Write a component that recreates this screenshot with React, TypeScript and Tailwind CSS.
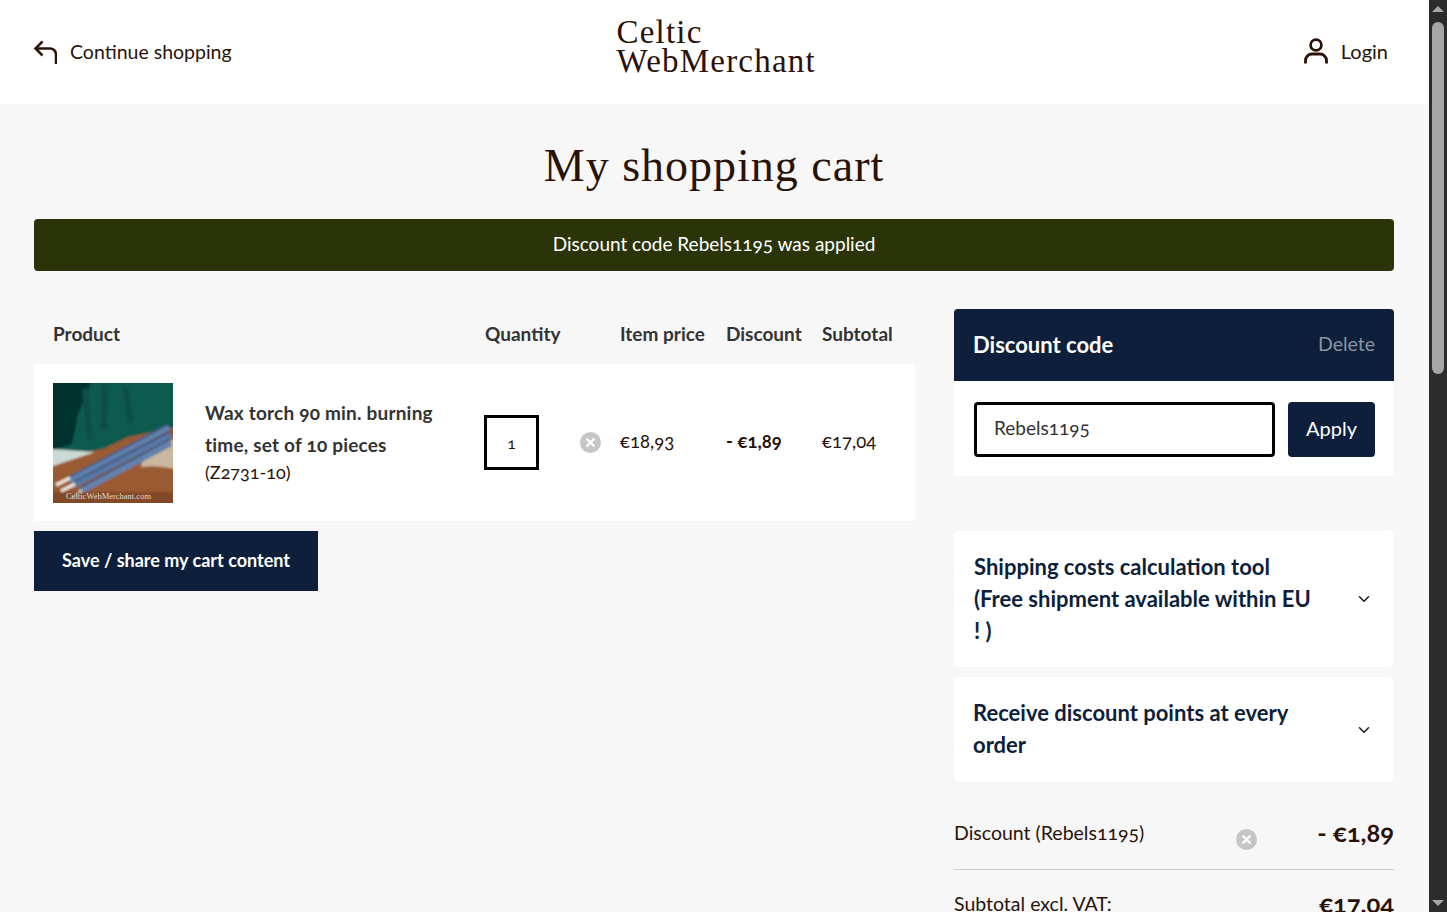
import { ChevronDown, X } from 'lucide-react'

const sans = "font-['Lato','Open_Sans',sans-serif] [font-variant-numeric:oldstyle-nums]"

function RemoveIcon() {
  return (
    <span className="flex h-[21px] w-[21px] items-center justify-center rounded-full bg-[#c6c6c6] text-white">
      <X size={13} strokeWidth={4.5} />
    </span>
  )
}

function BackIcon() {
  return (
    <svg viewBox="0 0 24 24" fill="none" stroke="currentColor" strokeWidth="2.5" className="h-6 w-6">
      <path d="M9.5 1.5 L2.5 8.5 L9.5 15.5" />
      <path d="M2.5 8.5 H17 a6 6 0 0 1 6 6 V24" />
    </svg>
  )
}

function UserIcon() {
  return (
    <svg viewBox="0 0 24 26" fill="none" stroke="currentColor" strokeWidth="2.8" className="h-[26px] w-6">
      <circle cx="12" cy="7" r="5.4" />
      <path d="M1.5 25.5 v-3 a6.5 6.5 0 0 1 6.5 -6.5 h8 a6.5 6.5 0 0 1 6.5 6.5 v3" />
    </svg>
  )
}

function TorchPhoto() {
  return (
    <svg viewBox="0 0 120 120" className="h-[120px] w-[120px] shrink-0">
      <defs>
        <filter id="soft">
          <feGaussianBlur stdDeviation="1.2" />
        </filter>
      </defs>
      <g filter="url(#soft)">
        <rect x="-3" y="-3" width="126" height="126" fill="#0e5a50" />
        <path d="M-3 -3h42l-14 34-6 30-25 8z" fill="#04302f" />
        <path d="M32 6l5 50M52 2l-1 44M72 4l6 36" stroke="#0b4f47" strokeWidth="6" />
        <path d="M-3 76 L50 66 L75 54 L123 44 V123 H-3z" fill="#9a5a30" />
        <path d="M-3 66 L42 69 L-3 84z" fill="#cdd9d4" />
        <path d="M88 84 q2 -18 34 -28 v30 q-18 -4 -34 -2z" fill="#c9b89e" />
        <path d="M16 97 L116 44" stroke="#5f7fac" strokeWidth="7" />
        <path d="M20 102 L118 52" stroke="#5877a6" strokeWidth="7" />
        <path d="M28 108 L118 60" stroke="#6482ae" strokeWidth="6" />
        <path d="M18 93 L116 41M22 98 L118 48M28 104 L118 56" stroke="#1e3560" strokeWidth="1" />
        <path d="M3 102 L17 95M8 108 L22 101M18 115 L29 108" stroke="#ece7dd" strokeWidth="3.5" />
        <rect x="-3" y="109" width="126" height="14" fill="#7a4526" opacity="0.75" />
      </g>
      <text x="13" y="116" fontSize="8.5" fill="#e8dccb" fontFamily="Liberation Serif, serif">
        CelticWebMerchant.com
      </text>
    </svg>
  )
}

function Accordion({ title, className }: { title: string; className: string }) {
  return (
    <div className={`flex items-center justify-between rounded-sm bg-white ${className}`}>
      <div className="w-[345px] pb-[1px] text-[22px] leading-8 font-bold text-[#0e1f3b]">{title}</div>
      <ChevronDown size={18} strokeWidth={2} className="text-[#1c1c1c]" />
    </div>
  )
}

export default function App() {
  return (
    <div className={`flex h-screen overflow-hidden bg-[#f7f7f7] text-[#2a1209] ${sans}`}>
      <div className="h-screen w-[1429px] shrink-0 overflow-hidden">
        <header className="flex h-[104px] items-center bg-white pr-[41px] pl-[33px]">
          <div className="flex-1">
            <a className="flex items-center gap-[13px] text-[19.5px]">
              <BackIcon />
              Continue shopping
            </a>
          </div>
          <div className="ml-[8px] flex w-[196px] flex-col gap-[2px] pb-[11px] font-['Liberation_Serif',serif] text-[33px] leading-[27px] tracking-[1.2px]">
            <span>Celtic</span>
            <span>WebMerchant</span>
          </div>
          <div className="flex flex-1 justify-end">
            <a className="flex items-center gap-[13px] pb-[2px] text-[20px]">
              <UserIcon />
              Login
            </a>
          </div>
        </header>

        <main className="pr-[35px] pl-[34px]">
          <h1 className="mt-[32px] text-center font-['Liberation_Serif',serif] text-[46px] leading-[60px] tracking-[1px]">
            My shopping cart
          </h1>
          <div className="mt-[23px] flex h-[52px] items-center justify-center rounded-sm bg-[#2a3408] pb-[2px] text-[19px] text-white">
            Discount code Rebels1195 was applied
          </div>

          <div className="mt-[38px] flex justify-between">
            <section className="w-[881px]">
              <div className="flex h-[55px] items-center pb-[4px] pl-[19px] text-[19px] font-bold text-[#333333]">
                <span className="w-[432px]">Product</span>
                <span className="w-[135px]">Quantity</span>
                <span className="w-[106px]">Item price</span>
                <span className="w-[96px]">Discount</span>
                <span>Subtotal</span>
              </div>
              <div className="flex h-[157px] items-center bg-white pl-[19px] text-[18.5px]">
                <TorchPhoto />
                <div className="ml-[32px] w-[279px] pb-[6px]">
                  <div className="w-[245px] text-[19px] leading-8 font-bold tracking-[0.2px] text-[#333333]">
                    Wax torch 90 min. burning time, set of 10 pieces
                  </div>
                  <div className="text-[18px] leading-[22px]">(Z2731-10)</div>
                </div>
                <div className="flex h-[55px] w-[55px] items-center justify-center border-[3px] border-black text-[16px]">
                  1
                </div>
                <div className="ml-[41px]">
                  <RemoveIcon />
                </div>
                <span className="ml-[19px] w-[106px] pb-[2px]">€18,93</span>
                <span className="w-[96px] pb-[2px] font-bold">- €1,89</span>
                <span className="pb-[2px]">€17,04</span>
              </div>
              <button className="mt-[10px] flex h-[60px] w-[284px] items-center justify-center bg-[#0e1f3b] pb-[2px] text-[18px] font-bold text-white">
                Save / share my cart content
              </button>
            </section>

            <aside className="w-[440px]">
              <div className="flex h-[72px] items-center justify-between rounded-t-sm bg-[#0e1f3b] px-[19px] pb-[2px]">
                <span className="text-[22px] font-bold text-white">Discount code</span>
                <span className="text-[19.5px] text-[#8b93a2]">Delete</span>
              </div>
              <div className="flex h-[95px] gap-[13px] bg-white pt-[21px] pr-[19px] pl-[20px]">
                <div className="flex h-[55px] w-[301px] items-center rounded-sm border-[3px] border-black pb-[2px] pl-[17px] text-[19px] text-[#333333]">
                  Rebels1195
                </div>
                <button className="h-[55px] w-[87px] rounded-sm bg-[#0e1f3b] pb-[4px] text-[20px] text-white">Apply</button>
              </div>

              <Accordion
                title="Shipping costs calculation tool (Free shipment available within EU ! )"
                className="mt-[55px] h-[136px] pr-[21px] pl-[20px]"
              />
              <Accordion
                title="Receive discount points at every order"
                className="mt-[10px] h-[105px] pr-[21px] pl-[19px]"
              />

              <div className="mt-[27px] flex h-[61px] items-center border-b border-[#cfcfcf] pb-[9px]">
                <span className="w-[282px] pb-[3px] text-[19.5px]">Discount (Rebels1195)</span>
                <span className="mt-[10px]">
                  <RemoveIcon />
                </span>
                <span className="ml-auto pb-[5px] text-[25.5px] font-bold">- €1,89</span>
              </div>
              <div className="mt-[14px] flex items-center justify-between">
                <span className="text-[19.5px]">Subtotal excl. VAT:</span>
                <span className="text-[25.5px] font-bold">€17,04</span>
              </div>
            </aside>
          </div>
        </main>
      </div>

      <div className="flex h-screen w-[18px] shrink-0 flex-col items-center bg-[#2c2c2c]">
        <span className="mt-[6px] h-0 w-0 border-x-[6px] border-b-[6px] border-x-transparent border-b-[#a6a6a6]" />
        <span className="mt-[10px] h-[352px] w-[12px] rounded-full bg-[#a6a6a6]" />
        <span className="mt-auto mb-[6px] h-0 w-0 border-x-[6px] border-t-[6px] border-x-transparent border-t-[#a6a6a6]" />
      </div>
    </div>
  )
}
